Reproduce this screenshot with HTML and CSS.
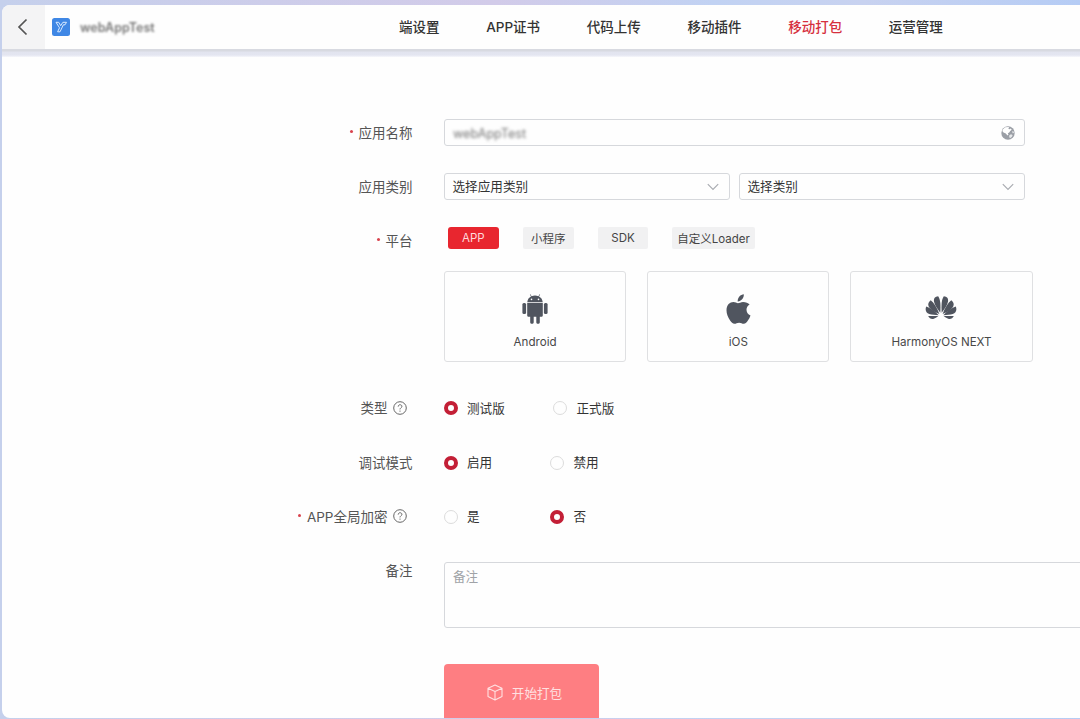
FILE: index.html
```html
<!DOCTYPE html>
<html lang="zh-CN">
<head>
  <meta charset="UTF-8" />
  <meta name="viewport" content="width=device-width, initial-scale=1.0" />
  <title>移动打包</title>
  <link rel="stylesheet" href="styles.css">
</head>
<body>

<div class="window">
  <header class="topbar">
    <button class="back" aria-label="返回">
      <svg width="12" height="18" viewBox="0 0 12 18"><path d="M9.5 1.5 2 9l7.500 7.500" fill="none" stroke="#555" stroke-width="1.700"/></svg>
    </button>
    <svg class="logo" width="18" height="18" viewBox="0 0 18 18">
      <rect width="18" height="18" rx="2.500" fill="#3f87e5"/>
      <path d="M4 4.300h2.700l2 3.400 2.200-3.400h3.600L13 6.800h-1.600L8 13.800H5.600l1.900-4z" fill="none" stroke="#d9eaff" stroke-width="1" stroke-linejoin="round"/>
    </svg>
    <span class="app-name">webAppTest</span>
    <nav class="menu">
      <a>端设置</a>
      <a>APP证书</a>
      <a>代码上传</a>
      <a>移动插件</a>
      <a class="active">移动打包</a>
      <a>运营管理</a>
    </nav>
  </header>

  <main class="form">
    <div class="row">
      <div class="label required">应用名称</div>
      <div class="input">
        <span class="masked">webAppTest</span>
        <svg width="14" height="14" viewBox="0 0 14 14">
          <circle cx="7" cy="7" r="6.700" fill="#9b9fa6"/>
          <path d="M2 3.200 4.300 1.300 7.500 1l.8 1-1.300.8 1.700.4 1-.8 1 1.300-1.500 1.300-1 1.600-1.400.6.700 1.300-1 .9-1.700-1.800L2.500 6.500 1.300 5z" fill="#fff"/>
          <path d="m8.300 9.300 1.700-1 1.600.8-.6 1.700-2 1.500-.8-1.300zM11 5.200l1.700.3.200 1.500-1.200.3z" fill="#e6e8ea"/>
        </svg>
      </div>
    </div>

    <div class="row">
      <div class="label">应用类别</div>
      <div class="selects">
        <div class="input">
          <span>选择应用类别</span>
          <svg class="arrow" width="12" height="8" viewBox="0 0 12 8"><path d="m.8 1.200 5.200 5.200 5.200-5.200"/></svg>
        </div>
        <div class="input">
          <span>选择类别</span>
          <svg class="arrow" width="12" height="8" viewBox="0 0 12 8"><path d="m.8 1.200 5.200 5.200 5.200-5.200"/></svg>
        </div>
      </div>
    </div>

    <div class="row platform">
      <div class="label required">平台</div>
      <div>
        <div class="tabs">
          <button class="tab active">APP</button>
          <button class="tab">小程序</button>
          <button class="tab">SDK</button>
          <button class="tab wide">自定义Loader</button>
        </div>
        <div class="cards">
          <div class="card">
            <svg width="26" height="30" viewBox="0 0 26 30" fill="#50555f">
              <path d="M5.300 8C5.600 5.300 7 3.500 9 2.500L7.900.5l.5-.3 1.200 2c2-.8 4.800-.8 6.800 0l1.200-2 .5.300L17 2.500c2 1 3.400 2.800 3.700 5.500z"/>
              <path d="M5.200 8.800h15.600v12.400c0 1-.7 1.600-1.600 1.600h-1.400v5.400c0 2-3.500 2-3.500 0v-5.400h-2.600v5.400c0 2-3.500 2-3.500 0v-5.400H6.800c-.9 0-1.600-.6-1.600-1.600z"/>
              <rect x=".4" y="9" width="3.700" height="11" rx="1.500"/>
              <rect x="21.900" y="9" width="3.700" height="11" rx="1.500"/>
              <circle cx="9.500" cy="5.400" r=".8" fill="#fff"/>
              <circle cx="16.500" cy="5.400" r=".8" fill="#fff"/>
            </svg>
            <span>Android</span>
          </div>
          <div class="card">
            <svg width="25" height="30" viewBox="0 0 25 30" fill="#50555f">
              <path d="M17.800.2c.2 2-.6 3.800-1.700 5.100-1.100 1.300-2.800 2.200-4.400 2.100-.2-1.900.7-3.800 1.700-5C14.500 1.200 16.300.3 17.800.2z"/>
              <path d="M23.600 10.500c-2 1.200-3.100 3-3.100 5.200 0 2.600 1.500 4.700 4 5.700-.6 1.800-1.500 3.500-2.600 5.100-1.100 1.700-2.300 3.300-4.200 3.300-1.800 0-2.400-1.100-4.600-1.100s-2.900 1.100-4.600 1.100c-1.800 0-3.200-1.600-4.400-3.300C1.900 23.400.5 19.800.5 16.300c0-5.400 3.400-8.300 6.900-8.300 1.900 0 3.400 1.200 4.600 1.200 1.100 0 2.900-1.300 5.100-1.300 2.700 0 5.100 1 6.500 2.600z"/>
            </svg>
            <span>iOS</span>
          </div>
          <div class="card">
            <svg width="32" height="30" viewBox="0 0 32 30" fill="#50555f">
              <path d="M15.300 18.800C15.700 11 15.600 5.800 13.200 2.200 10 2.300 8.500 4.400 9 7.500c.6 3.500 3.300 7.300 6.300 11.300z"/>
              <path d="M14.400 20.100C12 13.500 9 8.900 5.700 6.300 2.600 8.800 2.600 11.500 5 14.200c2 2.300 5.500 4.200 9.400 5.900z"/>
              <path d="M13.700 21.200C9.500 16.800 5 13.900 1.200 12.600c-1.400 3.500-.1 6.400 3 7.500 2.500.9 6 .9 9.500 1.100z"/>
              <path d="M13.400 22H3.200c1.200 2.500 3.500 3.500 5.600 2.700 1.800-.7 3.400-1.700 4.600-2.700z"/>
              <path d="M16.700 18.800C16.300 11 16.400 5.800 18.800 2.200c3.200.1 4.700 2.200 4.200 5.300-.6 3.500-3.300 7.300-6.300 11.300z"/>
              <path d="M17.600 20.100C20 13.500 23 8.900 26.300 6.300c3.100 2.500 3.100 5.200.7 7.900-2 2.300-5.500 4.200-9.400 5.900z"/>
              <path d="M18.300 21.200c4.200-4.400 8.700-7.300 12.500-8.600 1.400 3.500.1 6.400-3 7.500-2.500.9-6 .9-9.500 1.100z"/>
              <path d="M18.600 22h10.200c-1.200 2.500-3.500 3.500-5.600 2.700-1.800-.7-3.400-1.700-4.600-2.700z"/>
            </svg>
            <span>HarmonyOS NEXT</span>
          </div>
        </div>
      </div>
    </div>

    <div class="row">
      <div class="label has-help">类型
        <svg class="help" width="14" height="14" viewBox="0 0 14 14"><circle cx="7" cy="7" r="6.300"/><path d="M5.200 5.600c0-2.500 3.700-2.400 3.700-.2C8.900 6.800 7 6.800 7 8.400M7 9.600v1.100"/></svg>
      </div>
      <div class="radios loose">
        <label class="radio checked"><i></i>测试版</label>
        <label class="radio"><i></i>正式版</label>
      </div>
    </div>

    <div class="row">
      <div class="label">调试模式</div>
      <div class="radios">
        <label class="radio checked"><i></i>启用</label>
        <label class="radio"><i></i>禁用</label>
      </div>
    </div>

    <div class="row">
      <div class="label required has-help">APP全局加密
        <svg class="help" width="14" height="14" viewBox="0 0 14 14"><circle cx="7" cy="7" r="6.300"/><path d="M5.200 5.600c0-2.500 3.700-2.400 3.700-.2C8.900 6.800 7 6.800 7 8.400M7 9.600v1.100"/></svg>
      </div>
      <div class="radios">
        <label class="radio"><i></i>是</label>
        <label class="radio checked"><i></i>否</label>
      </div>
    </div>

    <div class="row remark">
      <div class="label">备注</div>
      <div class="textarea">备注</div>
    </div>

    <button class="submit">
      <svg width="16" height="17" viewBox="0 0 16 17"><path d="M8 1 15 4.300v8.200L8 16l-7-3.500V4.300zM1 4.300l7 3.300 7-3.300M8 7.600V16"/></svg>
      开始打包
    </button>
  </main>
</div>

</body>
</html>
```
FILE: styles.css
```css
:root {
  --red: #e8262f;
  --radio: #c31f36;
  --border: #d6d8dc;
  --text: #333;
  --label: #555;
}

* {
  margin: 0;
  padding: 0;
  box-sizing: border-box;
}

body {
  height: 719px;
  padding: 5px 0 1px 2px;
  overflow: hidden;
  background: linear-gradient(to right, #c5d0ec 0%, #cdcdea 25%, #d2cbe9 46%, #c1d2f3 66%, #c8d2f0 80%, #b5ccf5 100%);
  font-family: Inter, "Noto Sans CJK SC", sans-serif;
  font-size: 12.6px;
  color: var(--text);
}

button {
  border: none;
  font: inherit;
}

svg {
  flex: none;
}

.window {
  height: 713px;
  overflow: hidden;
  background: #fefefe;
  border-radius: 8px 0 0 8px;
}

.topbar {
  display: flex;
  align-items: center;
  height: 52px;
  padding-bottom: 8px;
  background: linear-gradient(transparent 44px, #d8dae1 44px, #d8dae1 46px, #e2e4ef 47px, #e4e6f1 50px, #f6f7fb 52px);
}

.back {
  display: flex;
  align-items: center;
  justify-content: center;
  width: 43px;
  height: 44px;
  padding-right: 2px;
  background: #f4f4f5;
}

.logo {
  margin-left: 7px;
}

.app-name {
  width: 75px;
  margin-left: 10px;
  font-size: 12.5px;
  font-weight: 600;
  color: #777;
  filter: blur(1.3px);
}

.menu {
  display: flex;
  gap: 46.7px;
  margin-left: 244px;
  padding-bottom: 2px;
  font-size: 13.5px;
  font-weight: 500;
  white-space: nowrap;
}

.menu .active {
  color: #d6303e;
}

.form {
  padding-top: 62px;
}

.row {
  display: flex;
  gap: 32px;
  height: 27px;
  margin-bottom: 27.2px;
}

.label {
  display: flex;
  flex: none;
  align-items: center;
  justify-content: flex-end;
  width: 410.5px;
  height: 27px;
  margin-right: -.5px;
  padding-bottom: 2px;
  font-size: 13.5px;
  color: var(--label);
}

.label.required::before {
  content: "";
  width: 3px;
  height: 3px;
  margin-right: 6px;
  border-radius: 50%;
  background: #d9434e;
}

.label.has-help {
  padding-right: 5.5px;
}

.help {
  margin: 1px 0 0 5.5px;
  fill: none;
  stroke: #666;
  stroke-width: 1;
}

.input {
  display: flex;
  align-items: center;
  justify-content: space-between;
  width: 581px;
  height: 27px;
  padding: 0 9px 0 8px;
  border: 1px solid var(--border);
  border-radius: 3px;
}

.masked {
  padding-top: 2px;
  color: #777;
  filter: blur(1.4px);
}

.selects {
  display: flex;
  gap: 9px;
}

.selects .input {
  width: 286px;
  padding: 0 10px 0 7.5px;
}

.selects span {
  padding-bottom: 2px;
}

.arrow {
  fill: none;
  stroke: #a9acb1;
  stroke-width: 1.2;
}

.platform {
  height: 135px;
  margin-bottom: 32.5px;
}

.tabs {
  display: flex;
  gap: 24px;
  padding-left: 4px;
}

.tab {
  width: 50.8px;
  height: 22px;
  border-radius: 2px;
  background: #f1f1f2;
  font-size: 11.5px;
  color: #444;
  white-space: nowrap;
}

.tab.active {
  border-radius: 3px;
  background: var(--red);
  color: #ffd9db;
}

.tab.wide {
  width: 82.5px;
}

.cards {
  display: flex;
  gap: 21px;
  margin-top: 22px;
}

.card {
  display: flex;
  flex-direction: column;
  align-items: center;
  gap: 11px;
  width: 182.2px;
  height: 91px;
  padding-top: 22px;
  border: 1px solid #dfe0e2;
  border-radius: 3px;
  font-size: 11.6px;
  color: #484848;
}

.radios {
  display: flex;
}

.radio {
  display: flex;
  align-items: center;
  gap: 9.5px;
  width: 106.5px;
  padding-bottom: 2px;
}

.loose .radio {
  width: 109.5px;
}

.radio i {
  width: 14px;
  height: 14px;
  margin: 2px 0 0 -.5px;
  border: 1px solid #dcdcdc;
  border-radius: 50%;
}

.radio.checked i {
  border: 4px solid var(--radio);
}

.remark {
  height: 66px;
  margin-bottom: 41px;
}

.textarea {
  flex: none;
  width: 700px;
  height: 66px;
  margin-top: 5px;
  padding: 3px 8px;
  border: 1px solid var(--border);
  border-radius: 3px;
  color: #a0a3a7;
}

.submit {
  display: flex;
  align-items: center;
  justify-content: center;
  gap: 9px;
  width: 155px;
  height: 60px;
  margin-left: 442px;
  padding: 0 0 3px 6px;
  border-radius: 4px;
  background: #fe7e82;
  color: #ffe0e1;
}

.submit svg {
  fill: none;
  stroke: #ffe0e1;
  stroke-width: 1.1;
  stroke-linejoin: round;
}
```
